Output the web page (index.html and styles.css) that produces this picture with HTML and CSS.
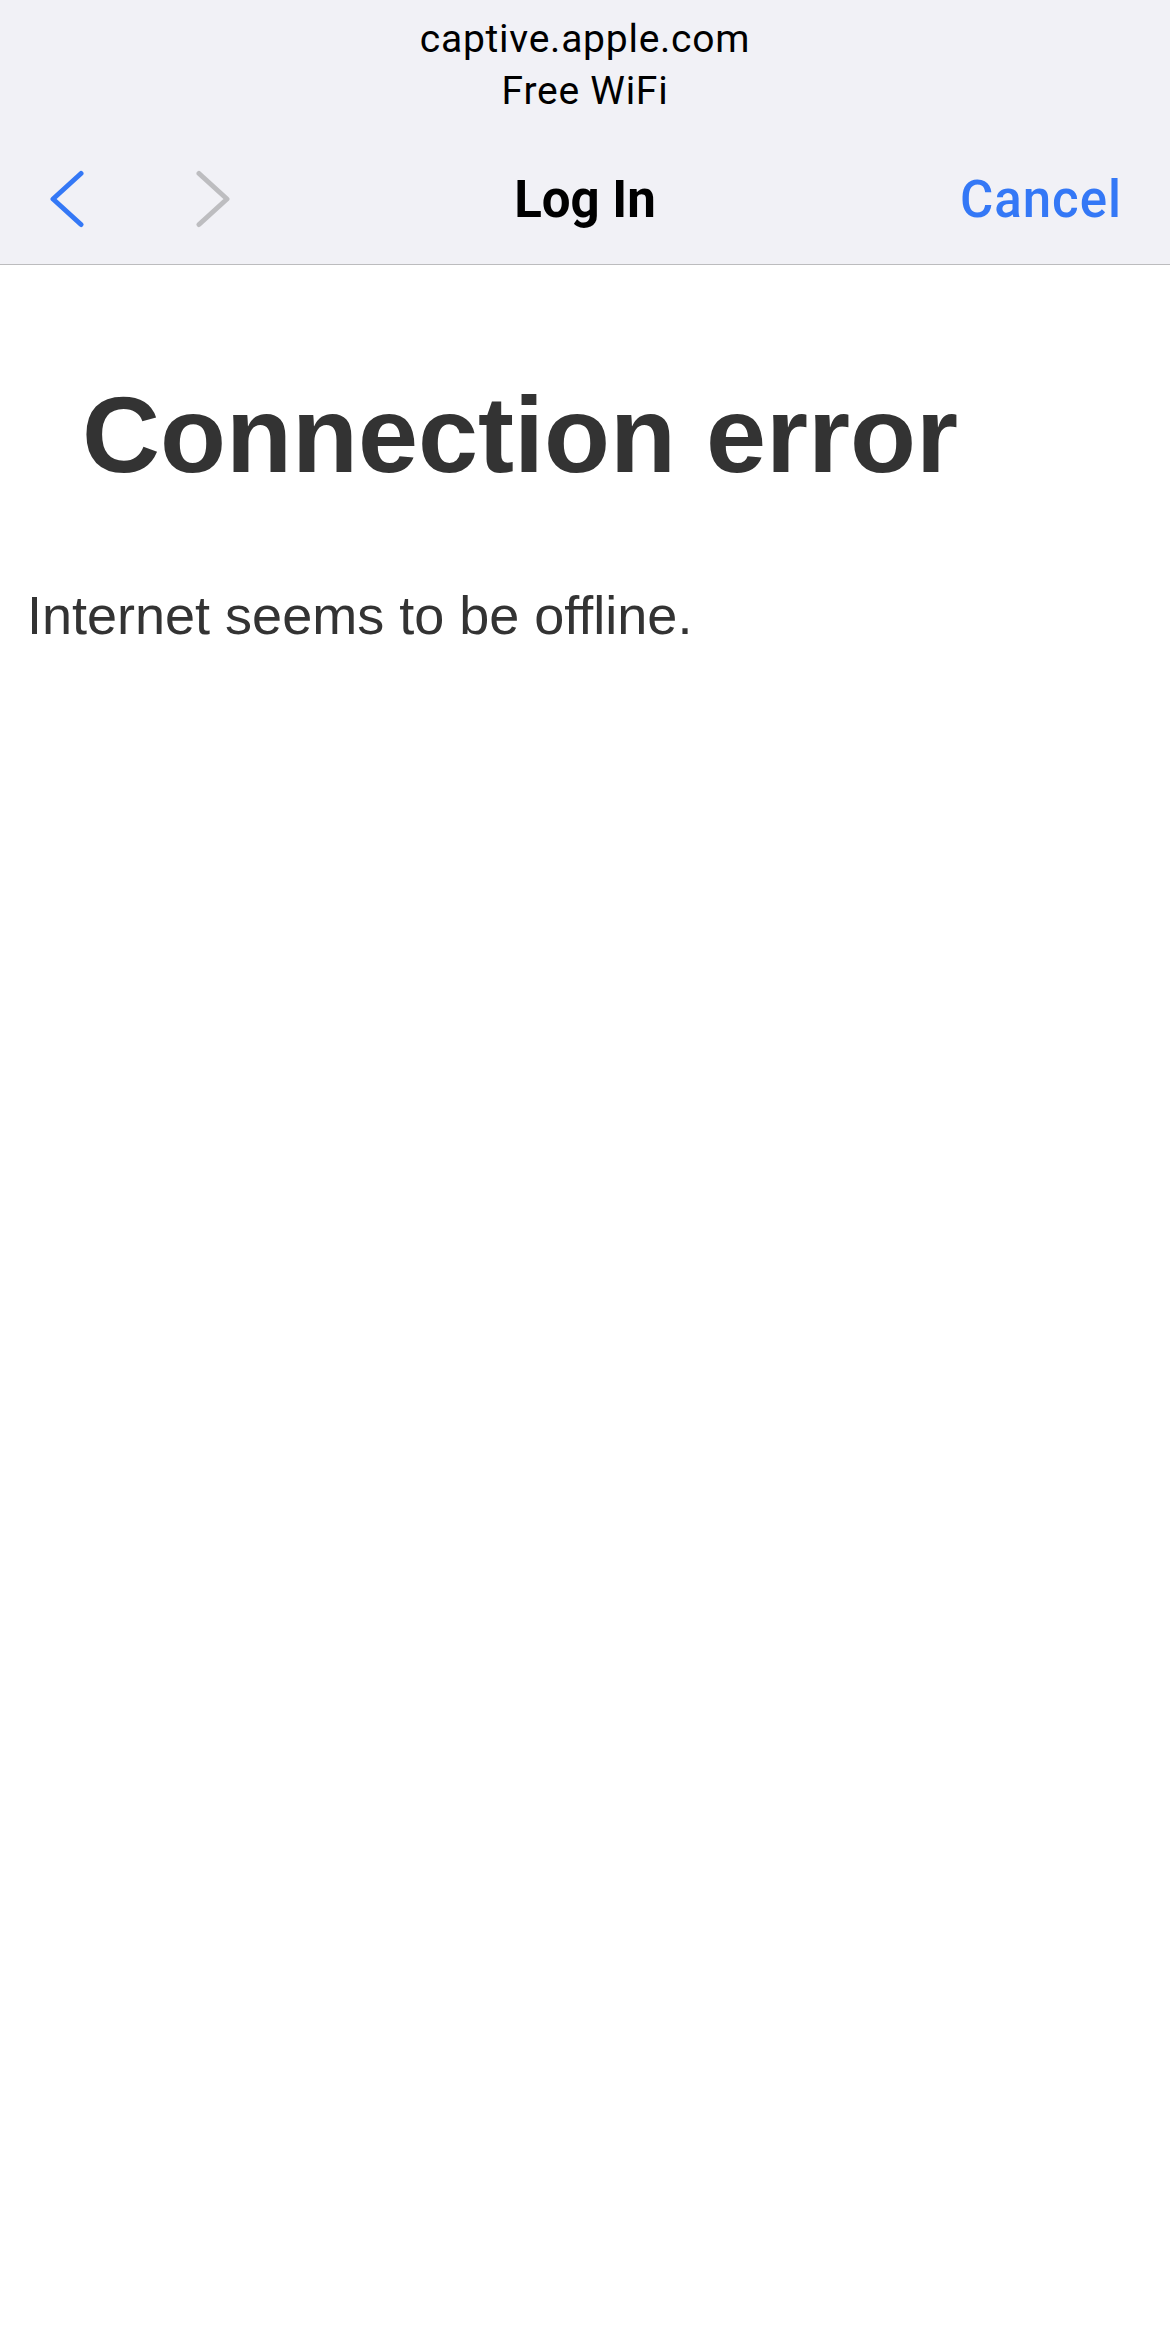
FILE: index.html
```html
<!DOCTYPE html>
<html lang="en">
<head>
<meta charset="utf-8">
<title>Log In</title>
<link rel="stylesheet" href="styles.css">
</head>
<body>
<header class="sheet-header">
  <div class="host">captive.apple.com</div>
  <div class="network">Free WiFi</div>
  <nav class="nav-row">
    <div class="nav-arrows">
      <svg class="chev chev-back" width="36" height="60" viewBox="0 0 36 60"><polyline points="31,3.5 3,29 31,54.5" fill="none" stroke="#3478f6" stroke-width="5" stroke-linecap="round" stroke-linejoin="round"/></svg>
      <svg class="chev chev-fwd" width="36" height="60" viewBox="0 0 36 60"><polyline points="5,3.5 33,29 5,54.5" fill="none" stroke="#bdbdc0" stroke-width="5" stroke-linecap="round" stroke-linejoin="round"/></svg>
    </div>
    <div class="nav-title">Log In</div>
    <div class="nav-cancel">Cancel</div>
  </nav>
</header>
<main class="page">
  <h1 class="title">Connection error</h1>
  <p class="message">Internet seems to be offline.</p>
</main>
</body>
</html>
```

FILE: styles.css
```css
html, body {
  margin: 0;
  padding: 0;
  background: #ffffff;
}

.sheet-header {
  background: #f1f1f6;
  border-bottom: 1px solid #bcbcbe;
  padding-top: 14px;
  box-sizing: content-box;
  height: 250px;
  font-family: Roboto, "Liberation Sans", sans-serif;
  color: #000;
}

.host, .network {
  text-align: center;
  font-size: 39px;
  line-height: 50px;
  letter-spacing: 0.75px;
}

.network {
  margin-top: 2px;
}

.nav-row {
  margin-top: 54px;
  height: 60px;
  display: grid;
  grid-template-columns: 1fr auto 1fr;
  align-items: center;
}

.nav-arrows {
  display: flex;
  align-items: center;
  gap: 108px;
  padding-left: 50px;
}

.chev {
  display: block;
}

.nav-title {
  font-size: 51px;
  font-weight: 700;
  line-height: 60px;
  text-align: center;
}

.nav-cancel {
  font-size: 51px;
  font-weight: 500;
  line-height: 60px;
  letter-spacing: 1px;
  color: #3478f6;
  text-align: right;
  padding-right: 48px;
}

.page {
  font-family: "Liberation Sans", Arial, Helvetica, sans-serif;
  color: #333333;
}

.title {
  margin: 108px 0 0 82px;
  font-size: 108px;
  line-height: 124px;
  font-weight: 700;
}

.message {
  margin: 88px 0 0 27px;
  font-size: 54px;
  line-height: 61px;
}
```
